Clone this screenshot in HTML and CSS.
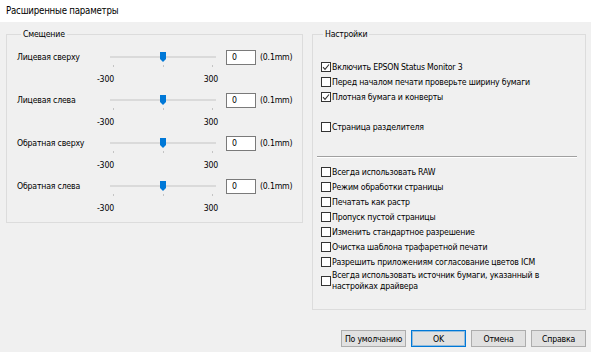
FILE: index.html
```html
<!DOCTYPE html>
<html>
<head>
    <title>Расширенные параметры</title>
    <link rel="stylesheet" href="styles.css">
</head>
<body>
    <div class="titlebar">Расширенные параметры</div>
    <div class="dialog">
        <div class="groups">
            <!-- Offsets -->
            <fieldset class="group offset-group">
                <legend>Смещение</legend>
                <div class="offset-row">
                    <label class="offset-label">Лицевая сверху</label>
                    <div class="slider">
                        <div class="slider-track">
                            <div class="track-line"></div>
                            <svg class="thumb" viewBox="0 0 6 10"><path d="M0 0H6V7L3 10L0 7Z"/></svg>
                        </div>
                        <div class="ticks"><span></span><span></span><span></span></div>
                        <div class="scale"><span>-300</span><span>300</span></div>
                    </div>
                    <input type="text" class="offset-input" value="0">
                    <span class="unit">(0.1mm)</span>
                </div>
                <div class="offset-row">
                    <label class="offset-label">Лицевая слева</label>
                    <div class="slider">
                        <div class="slider-track">
                            <div class="track-line"></div>
                            <svg class="thumb" viewBox="0 0 6 10"><path d="M0 0H6V7L3 10L0 7Z"/></svg>
                        </div>
                        <div class="ticks"><span></span><span></span><span></span></div>
                        <div class="scale"><span>-300</span><span>300</span></div>
                    </div>
                    <input type="text" class="offset-input" value="0">
                    <span class="unit">(0.1mm)</span>
                </div>
                <div class="offset-row">
                    <label class="offset-label">Обратная сверху</label>
                    <div class="slider">
                        <div class="slider-track">
                            <div class="track-line"></div>
                            <svg class="thumb" viewBox="0 0 6 10"><path d="M0 0H6V7L3 10L0 7Z"/></svg>
                        </div>
                        <div class="ticks"><span></span><span></span><span></span></div>
                        <div class="scale"><span>-300</span><span>300</span></div>
                    </div>
                    <input type="text" class="offset-input" value="0">
                    <span class="unit">(0.1mm)</span>
                </div>
                <div class="offset-row">
                    <label class="offset-label">Обратная слева</label>
                    <div class="slider">
                        <div class="slider-track">
                            <div class="track-line"></div>
                            <svg class="thumb" viewBox="0 0 6 10"><path d="M0 0H6V7L3 10L0 7Z"/></svg>
                        </div>
                        <div class="ticks"><span></span><span></span><span></span></div>
                        <div class="scale"><span>-300</span><span>300</span></div>
                    </div>
                    <input type="text" class="offset-input" value="0">
                    <span class="unit">(0.1mm)</span>
                </div>
            </fieldset>

            <!-- Settings -->
            <fieldset class="group settings-group">
                <legend>Настройки</legend>
                <label class="check"><span class="box"><svg viewBox="0 0 8 8"><path d="M1 4.2L3 6.3L7 1.5"/></svg></span>Включить EPSON Status Monitor 3</label>
                <label class="check"><span class="box"></span>Перед началом печати проверьте ширину бумаги</label>
                <label class="check"><span class="box"><svg viewBox="0 0 8 8"><path d="M1 4.2L3 6.3L7 1.5"/></svg></span>Плотная бумага и конверты</label>
                <label class="check spaced"><span class="box"></span>Страница разделителя</label>

                <div class="separator"></div>

                <label class="check"><span class="box"></span>Всегда использовать RAW</label>
                <label class="check"><span class="box"></span>Режим обработки страницы</label>
                <label class="check"><span class="box"></span>Печатать как растр</label>
                <label class="check"><span class="box"></span>Пропуск пустой страницы</label>
                <label class="check"><span class="box"></span>Изменить стандартное разрешение</label>
                <label class="check"><span class="box"></span>Очистка шаблона трафаретной печати</label>
                <label class="check"><span class="box"></span>Разрешить приложениям согласование цветов ICM</label>
                <label class="check multi"><span class="box"></span><span>Всегда использовать источник бумаги, указанный в<br>настройках драйвера</span></label>
            </fieldset>
        </div>

        <div class="buttons">
            <button type="button" class="btn btn-wide">По умолчанию</button>
            <button type="button" class="btn btn-default">OK</button>
            <button type="button" class="btn">Отмена</button>
            <button type="button" class="btn">Справка</button>
        </div>
    </div>
</body>
</html>
```

FILE: styles.css
```css
body {
    margin: 0;
    width: 591px;
    height: 352px;
    overflow: hidden;
    background-color: #f0f0f0;
    font-family: "DejaVu Sans Condensed", "Liberation Sans", Arial, sans-serif;
    font-size: 8.7px;
    letter-spacing: -0.2px;
    color: #000;
}

.titlebar {
    height: 22px;
    padding-left: 6px;
    background-color: #fff;
    font-size: 9.6px;
    line-height: 22px;
}

.dialog {
    padding: 6px 5px 0 6px;
}

.groups {
    display: flex;
    align-items: flex-start;
    gap: 9px;
}

.group {
    box-sizing: border-box;
    margin: 0;
    min-width: 0;
    border: 1px solid #dcdcdc;
}

.group legend {
    padding: 0 2px;
    margin-left: 4px;
    line-height: 12px;
}

/* offsets */
.offset-group {
    width: 297px;
    height: 195px;
    padding: 9.5px 0 0 10px;
}

.offset-row {
    display: flex;
    align-items: flex-start;
    height: 43px;
}

.offset-label {
    width: 80px;
    line-height: 15px;
}

.slider {
    width: 121px;
}

.slider-track {
    display: grid;
    place-items: center;
    height: 15px;
    margin: 0 2px 0 13px;
}

.track-line {
    grid-area: 1 / 1;
    width: 100%;
    height: 2px;
    background-color: #dadada;
}

.thumb {
    grid-area: 1 / 1;
    width: 6px;
    height: 10px;
    fill: #0078d7;
}

.ticks {
    display: flex;
    justify-content: space-between;
    height: 2px;
    margin: 0 5px 0 16px;
}

.ticks span {
    width: 1px;
    background-color: #c4c4c4;
}

.scale {
    display: flex;
    justify-content: space-between;
    margin-top: 6.5px;
    line-height: 12px;
}

.offset-input {
    box-sizing: border-box;
    width: 30px;
    height: 15px;
    margin: 0 0 0 8px;
    padding: 0 0 0 5px;
    border: 1px solid #7a7a7a;
    background-color: #fff;
    font: inherit;
    letter-spacing: inherit;
    color: #000;
    outline: none;
}

.unit {
    margin-left: 4px;
    line-height: 15px;
}

/* settings */
.settings-group {
    width: 274px;
    height: 282px;
    padding: 19px 8px 0 8px;
}

.settings-group legend {
    margin-left: 2px;
}

.check {
    display: flex;
    align-items: center;
    height: 15px;
}

.check.spaced {
    margin-top: 15px;
}

.check.multi {
    height: auto;
    padding: 1px 0;
    line-height: 11px;
}

.box {
    box-sizing: border-box;
    flex: none;
    width: 10px;
    height: 10px;
    margin-right: 1px;
    border: 1px solid #333;
    background-color: #fff;
}

.box svg {
    display: block;
    width: 8px;
    height: 8px;
    fill: none;
    stroke: #333;
    stroke-width: 1.1;
}

.separator {
    margin: 22px 0 6px -4px;
    border-top: 1px solid #a0a0a0;
    border-bottom: 1px solid #fff;
}

/* buttons */
.buttons {
    display: flex;
    justify-content: flex-end;
    gap: 5px;
    margin-top: 20px;
}

.btn {
    box-sizing: border-box;
    width: 55px;
    height: 17px;
    padding: 0;
    border: 1px solid #adadad;
    background-color: #e1e1e1;
    font: inherit;
    letter-spacing: inherit;
    color: #000;
    white-space: nowrap;
}

.btn-wide {
    width: 65px;
}

.btn-default {
    border-color: #0078d7;
    box-shadow: inset 0 0 0 1px rgba(0, 120, 215, 0.35);
}
```
